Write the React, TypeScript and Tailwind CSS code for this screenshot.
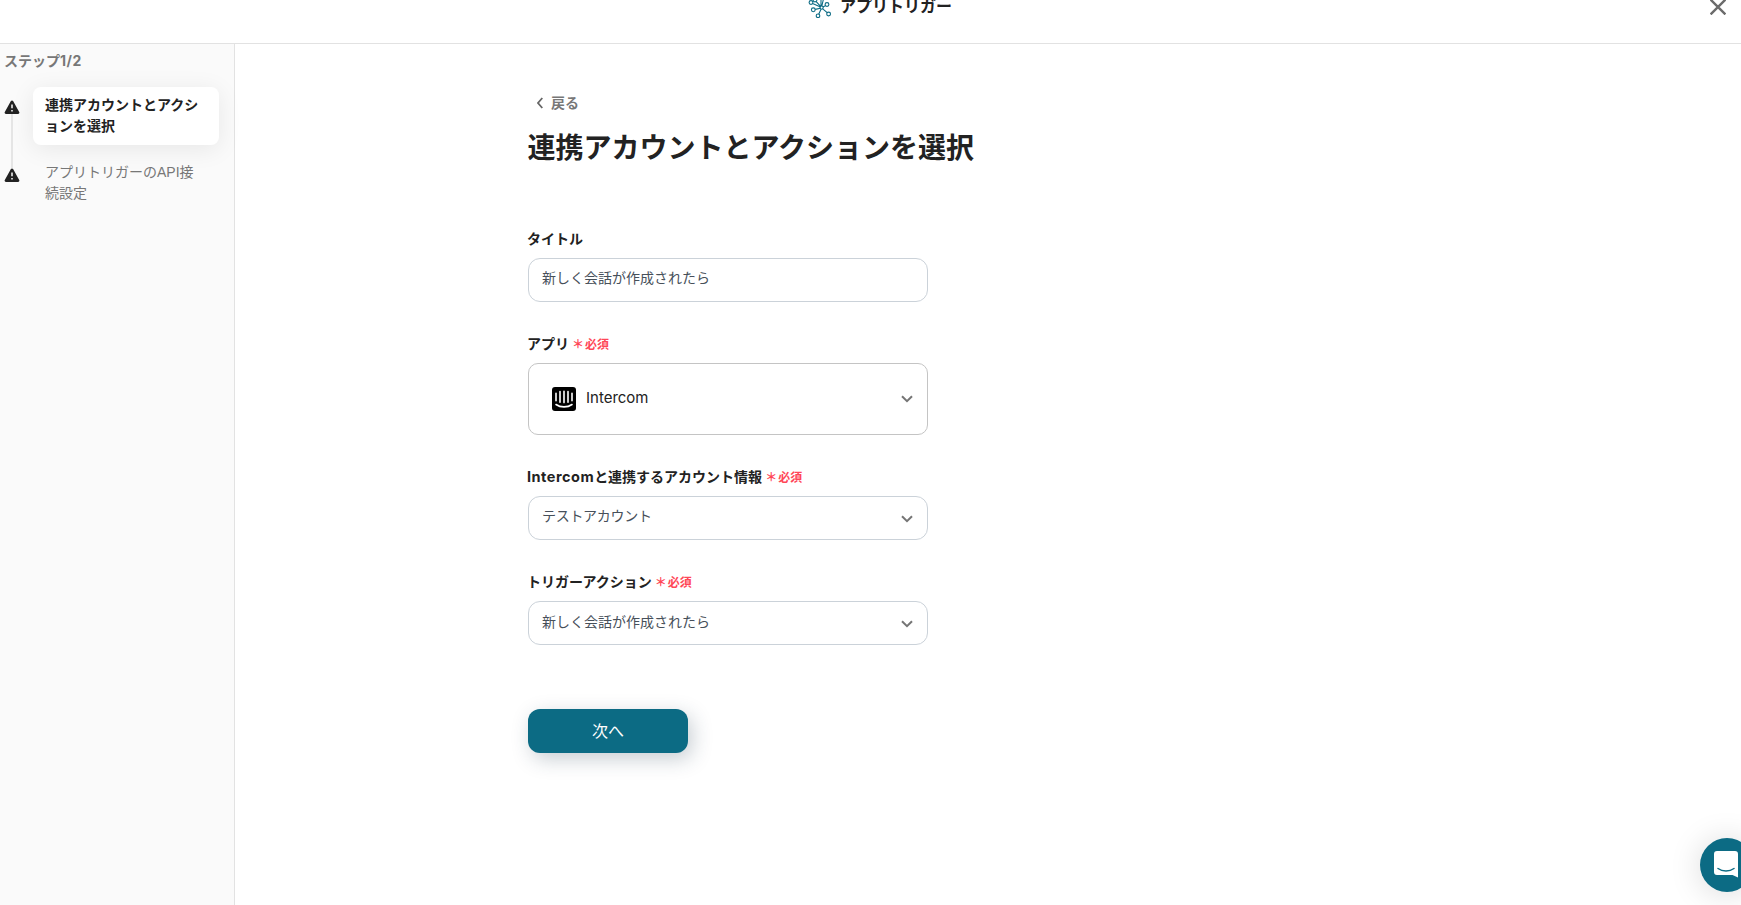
import type { ReactNode } from "react";

interface Step {
  title: string;
  active?: boolean;
}

const steps: Step[] = [
  { title: "連携アカウントとアクションを選択", active: true },
  { title: "アプリトリガーのAPI接続設定" },
];

function NetworkIcon() {
  return (
    <svg width="24" height="24" viewBox="0 0 24 24" fill="none" stroke="#0c6b84" strokeWidth="1.1">
      <circle cx="3" cy="8.5" r="1.9" />
      <circle cx="5.3" cy="15.8" r="1.9" />
      <circle cx="10" cy="21.8" r="1.8" />
      <circle cx="20.6" cy="20" r="1.9" />
      <circle cx="19" cy="10.5" r="1.9" />
      <circle cx="7" cy="6" r="1.9" />
      <circle cx="16" cy="2.5" r="1.9" />
      <path d="M12.4 14.2 7.2 15.4M13 15.2 10.7 20.2M14.7 14.8l4.5 3.9M14.9 13l2.4-1.3M12.5 13 4.6 9.4M13.8 12.2l1.8-7.8M13 4v8M8.2 7.6l4.6 5" />
      <circle cx="13.6" cy="13.6" r="1.6" />
    </svg>
  );
}

function CloseIcon() {
  return (
    <svg width="16" height="16" viewBox="0 0 16 16" stroke="#6b6b6b" strokeWidth="2.4">
      <path d="M.6.6 15.4 15.4M15.4.6.6 15.4" />
    </svg>
  );
}

function WarningIcon() {
  return (
    <svg width="16" height="14" viewBox="0 0 16 14">
      <path d="M6.9 1a1.3 1.3 0 0 1 2.200 0l6.100 10.900a1.400 1.400 0 0 1-1.200 2.100H2a1.400 1.400 0 0 1-1.200-2.100z" fill="#222" />
      <path d="M8 4.500v3.800M8 10v1.600" stroke="#fafafa" strokeWidth="1.500" />
    </svg>
  );
}

function ChevronDown() {
  return (
    <svg width="12" height="8" viewBox="0 0 12 8" fill="none" stroke="#757575" strokeWidth="2">
      <path d="M1 1.200 6 6.200l5-5" />
    </svg>
  );
}

function IntercomIcon() {
  return (
    <svg width="24" height="24" viewBox="0 0 24 24" fill="none">
      <rect width="24" height="24" rx="3" fill="#000" />
      <path
        d="M4 6.200v7.600M8 4.600v10.600M12 4.200v11.400M16 4.600v10.600M20 6.200v7.600M4 17.500c4.500 3.200 11.500 3.200 16 0"
        stroke="#fff"
        strokeWidth="1.600"
        strokeLinecap="round"
      />
    </svg>
  );
}

function Field({ label, required, children }: { label: ReactNode; required?: boolean; children: ReactNode }) {
  return (
    <div className="flex flex-col gap-[9px]">
      <div className="flex h-5 items-center text-sm leading-5 font-bold text-[#222]">
        <span className="-mt-px -ml-px">{label}</span>
        {required && (
          <span className="mt-px ml-1 flex gap-px text-xs text-[#ff4757]">
            <span className="w-[11px] -indent-px">＊</span>
            <span>必須</span>
          </span>
        )}
      </div>
      {children}
    </div>
  );
}

function SelectBox({ children }: { children: ReactNode }) {
  return (
    <button className="flex h-11 w-full items-center justify-between rounded-xl border border-[#cbd2d9] pt-px pr-[14px] pl-[13px] text-sm text-[#47505a]">
      {children}
      <ChevronDown />
    </button>
  );
}

export default function App() {
  return (
    <div className="flex h-[905px] w-full flex-col overflow-hidden bg-white font-['Liberation_Sans','Noto_Sans_CJK_JP',sans-serif] text-[#222]">
      <header className="-mt-[33px] flex h-[77px] shrink-0 items-center border-b border-[#e2e2e2] pr-[15px] pl-2">
        <div className="flex flex-1 items-center justify-center gap-2 pt-[2px] pl-[42px]">
          <NetworkIcon />
          <h1 className="mt-px text-base leading-5 font-bold">アプリトリガー</h1>
        </div>
        <button aria-label="閉じる" className="mt-[3px]">
          <CloseIcon />
        </button>
      </header>

      <div className="flex min-h-0 flex-1">
        <aside className="w-[235px] shrink-0 border-r border-[#e2e2e2] bg-[#fafafa] pt-[6px]">
          <p className="h-[21px] pl-1 text-sm leading-[21px] font-bold text-[#777]">
            ステップ<span className="font-['Inter'] tracking-[0.5px]">1/2</span>
          </p>
          <ol className="mt-4 flex flex-col gap-[10px]">
            {steps.map((step, index) => (
              <li key={step.title} className="flex gap-[13px] pl-1">
                <div className="flex w-4 flex-col items-center pt-[13px]">
                  <WarningIcon />
                  {index < steps.length - 1 && <div className="-mb-[23px] w-[2px] flex-1 bg-[#e5e5e5]" />}
                </div>
                <div
                  className={
                    step.active
                      ? "w-[186px] rounded-lg bg-white px-3 py-2 text-sm leading-[21px] font-bold shadow-[0_4px_24px_rgba(0,0,0,0.08)]"
                      : "w-[186px] px-3 pt-[7px] pb-2 text-sm leading-[21px] text-[#777]"
                  }
                >
                  <div className="w-[156px] break-all">{step.title}</div>
                </div>
              </li>
            ))}
          </ol>
        </aside>

        <main className="flex-1 pt-[48px] pl-[293px]">
          <button className="flex h-[21px] items-center gap-2 pl-[9px] text-sm font-bold text-[#777]">
            <svg width="6" height="12" viewBox="0 0 6 12" fill="none" stroke="#666" strokeWidth="1.800">
              <path d="M5.300 1 1 6l4.300 5" />
            </svg>
            戻る
          </button>
          <h2 className="mt-[15px] -ml-[0.5px] text-[28px] leading-[42px] font-bold">連携アカウントとアクションを選択</h2>

          <form className="mt-[59px] flex w-[400px] flex-col gap-8">
            <Field label="タイトル">
              <div className="flex h-11 items-center rounded-xl border border-[#cbd2d9] px-[13px] text-sm text-[#47505a]">
                <span className="-mt-[4px]">新しく会話が作成されたら</span>
              </div>
            </Field>
            <Field label="アプリ" required>
              <button className="flex h-[72px] items-center rounded-[10px] border border-[#c4c4c4] pr-[14px] pl-[23px]">
                <IntercomIcon />
                <span className="-mt-[2px] ml-[10px] flex-1 text-left font-['Inter'] text-[15px]">Intercom</span>
                <ChevronDown />
              </button>
            </Field>
            <Field
              label={
                <>
                  <span className="font-['Inter'] text-[14.5px] tracking-[0.5px]">Intercom</span>と連携するアカウント情報
                </>
              }
              required
            >
              <SelectBox>
                <span className="-mt-[5px] tracking-[-0.3px]">テストアカウント</span>
              </SelectBox>
            </Field>
            <Field label="トリガーアクション" required>
              <SelectBox>
                <span className="-mt-[3px]">新しく会話が作成されたら</span>
              </SelectBox>
            </Field>
          </form>

          <button className="mt-16 h-11 w-40 rounded-xl bg-[#0c6b84] pt-px text-base text-white shadow-[4px_6px_20px_rgba(34,60,80,0.250)]">
            次へ
          </button>
        </main>
      </div>

      {/* Chat launcher, partly past the right edge */}
      <button
        aria-label="チャット"
        className="fixed top-[838px] -right-[12.5px] flex h-[53.500px] w-[53.500px] items-center justify-center rounded-full bg-[#0c6b84] shadow-[0_2px_32px_rgba(0,0,0,0.150)]"
      >
        <svg width="24" height="27" viewBox="0 0 24 27" fill="none" className="mr-px">
          <path d="M3 0h18a3 3 0 0 1 3 3v23.500L18.500 24H3a3 3 0 0 1-3-3V3a3 3 0 0 1 3-3z" fill="#fff" />
          <path d="M4 17.500c4.500 3.200 11.500 3.200 16 0" stroke="#0c6b84" strokeWidth="1.500" strokeLinecap="round" />
        </svg>
      </button>
    </div>
  );
}
